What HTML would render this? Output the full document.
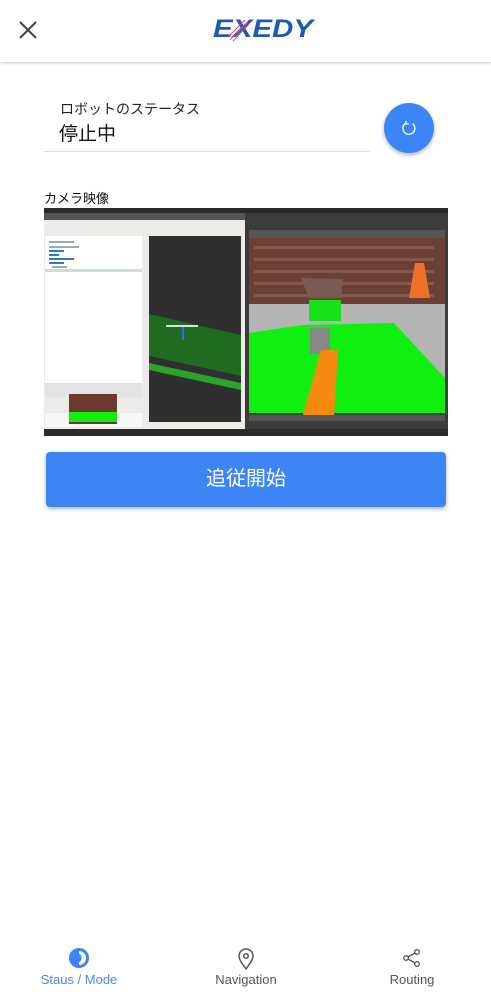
<!DOCTYPE html>
<html><head><meta charset="utf-8">
<style>
body{margin:0;width:491px;height:996px;background:#fff;font-family:"Liberation Sans","Noto Sans CJK JP",sans-serif;position:relative;overflow:hidden}
.hdr{position:absolute;left:0;top:0;width:491px;height:62px;background:#fff;box-shadow:0 1px 3px rgba(0,0,0,.25)}
.abs{position:absolute}
</style></head><body>
<div class="hdr">
<svg class="abs" style="left:18px;top:20px" width="20" height="20" viewBox="0 0 20 20"><path d="M2 2L18 18M18 2L2 18" stroke="#444" stroke-width="2"/></svg>
<div class="abs" style="left:213px;top:15px;font:italic bold 25px 'Liberation Sans',sans-serif;color:#1a5bb5;transform:scaleX(1.18);transform-origin:0 0">EXEDY</div>
<svg class="abs" style="left:228px;top:20px" width="22" height="22" viewBox="0 0 22 22"><path d="M2 20L20 2M5 21L21 4M0 17L17 0" stroke="#e5408a" stroke-width="1"/></svg>
</div>
<div class="abs" style="left:60px;top:99px;font-size:14px;color:#222">ロボットのステータス</div>
<div class="abs" style="left:59px;top:119px;font-size:19px;color:#111">停止中</div>
<div class="abs" style="left:44px;top:151px;width:326px;height:1px;background:#ddd"></div>
<div class="abs" style="left:384px;top:103px;width:50px;height:50px;border-radius:50%;background:#3d84f6;box-shadow:0 2px 4px rgba(0,0,0,.3)">
<svg style="position:absolute;left:16px;top:16px" width="18" height="18" viewBox="0 0 18 18"><path d="M12.5 4.5A6 6 0 1 1 6 4" fill="none" stroke="#fff" stroke-width="1.3"/><path d="M6 2v3h3" fill="none" stroke="#fff" stroke-width="1.3"/></svg>
</div>
<div class="abs" style="left:44px;top:188px;font-size:13px;color:#111">カメラ映像</div>
<svg class="abs" style="left:44px;top:208px" width="404" height="228" viewBox="0 0 404 228">
<rect width="404" height="228" fill="#3b3a36"/>
<rect y="0" width="404" height="5" fill="#2a2a28"/>
<rect x="0" y="5" width="201" height="216" fill="#ecebe8"/>
<rect x="0" y="5" width="201" height="7" fill="#555"/>
<rect x="1" y="28" width="97" height="162" fill="#fff"/>
<g fill="#9ab">
<rect x="5" y="33" width="25" height="2"/><rect x="5" y="38" width="30" height="2"/><rect x="5" y="42" width="15" height="2" fill="#37c"/><rect x="5" y="46" width="10" height="2" fill="#37c"/><rect x="5" y="50" width="25" height="2" fill="#37c"/><rect x="5" y="54" width="15" height="2" fill="#37c"/><rect x="8" y="58" width="15" height="2"/>
</g>
<rect x="1" y="61" width="97" height="3" fill="#cdd"/>
<rect x="1" y="175" width="97" height="15" fill="#e4e4e4"/>
<rect x="1" y="205" width="97" height="14" fill="#f7f7f7"/>
<rect x="25" y="186" width="48" height="30" fill="#6b3b30"/>
<rect x="25" y="204" width="48" height="10" fill="#10f010"/>
<rect x="105" y="28" width="92" height="186" fill="#2f2f2f"/>
<polygon points="105,106 197,127 197,168 105,148" fill="#1f6b1f"/>
<polygon points="105,155 197,175 197,182 105,162" fill="#2aa52a"/>
<rect x="138" y="118" width="2" height="14" fill="#36f"/>
<rect x="122" y="117" width="32" height="2" fill="#ddd"/>
<rect x="203" y="5" width="201" height="216" fill="#3c3c3a"/>
<rect x="205" y="22" width="196" height="8" fill="#555"/>
<rect x="205" y="30" width="196" height="68" fill="#6a3f36"/>
<g fill="#86584c"><rect x="210" y="38" width="180" height="3"/><rect x="210" y="50" width="180" height="3"/><rect x="210" y="62" width="180" height="3"/><rect x="210" y="74" width="180" height="3"/><rect x="210" y="86" width="180" height="3"/></g>
<polygon points="205,96 401,96 401,205 205,205" fill="#b4b4b4"/>
<polygon points="205,125 258,117 350,115 401,170 401,205 205,205" fill="#10f010"/>
<polygon points="257,70 299,71 297,90 265,90" fill="#7a5a50"/>
<polygon points="265,92 297,92 297,113 265,113" fill="#18e018"/>
<polygon points="371,55 380,55 386,90 365,90" fill="#f0702a"/>
<rect x="266" y="120" width="20" height="26" fill="#888"/>
<polygon points="277,142 294,142 290,210 258,210" fill="#f58a10"/>
<rect x="205" y="207" width="196" height="6" fill="#555"/>
<rect x="0" y="221" width="404" height="7" fill="#2c2c2a"/>
</svg>
<div class="abs" style="left:46px;top:452px;width:400px;height:55px;border-radius:4px;background:#3d84f6;box-shadow:0 2px 4px rgba(0,0,0,.3);color:#fff;font-size:20px;text-align:center;line-height:55px">追従開始</div>
<svg class="abs" style="left:68px;top:947px" width="22" height="22" viewBox="0 0 22 22"><circle cx="11" cy="11" r="10" fill="#3d84f6"/><path d="M11 4A7 7 0 0 1 11 18Z" fill="#fff"/><ellipse cx="11" cy="11" rx="2.5" ry="4" fill="#3d84f6"/></svg>
<div class="abs" style="left:0;top:972px;width:158px;text-align:center;font-size:13px;color:#4a86f0">Staus / Mode</div>
<svg class="abs" style="left:236px;top:947px" width="20" height="24" viewBox="0 0 20 24"><path d="M10 22C5 15 3 12 3 9a7 7 0 0 1 14 0c0 3-2 6-7 13z" fill="none" stroke="#555" stroke-width="1.5"/><circle cx="10" cy="9" r="2.3" fill="none" stroke="#555" stroke-width="1.5"/></svg>
<div class="abs" style="left:166px;top:972px;width:160px;text-align:center;font-size:13px;color:#555">Navigation</div>
<svg class="abs" style="left:402px;top:948px" width="20" height="20" viewBox="0 0 20 20"><g fill="none" stroke="#555" stroke-width="1.3"><circle cx="15" cy="4" r="2.3"/><circle cx="4" cy="10" r="2.3"/><circle cx="15" cy="16" r="2.3"/><path d="M6 9l7-4M6 11l7 4"/></g></svg>
<div class="abs" style="left:332px;top:972px;width:160px;text-align:center;font-size:13px;color:#555">Routing</div>
</body></html>
